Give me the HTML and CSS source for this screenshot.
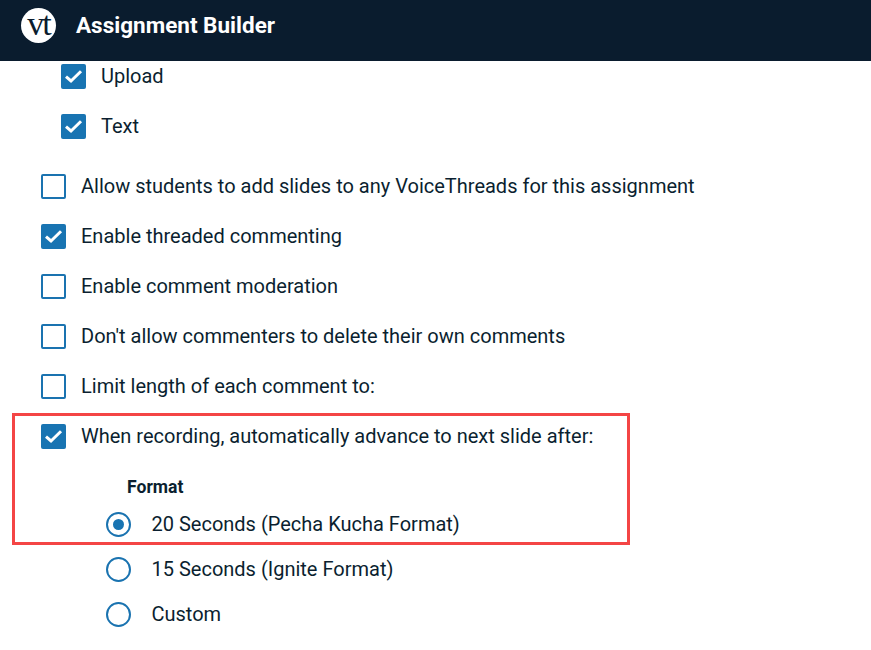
FILE: index.html
```html
<!DOCTYPE html>
<html lang="en">
<head>
<meta charset="utf-8">
<title>Assignment Builder</title>
<link rel="stylesheet" href="styles.css">
</head>
<body>
<header class="topbar">
  <div class="logo">vt</div>
  <h1 class="title">Assignment Builder</h1>
</header>
<main class="content">
  <div class="group sub">
    <div class="row"><span class="box on"><svg viewBox="0 0 25 25"><path d="M5 12.6l5 4.4L20 7.2"/></svg></span><span class="label">Upload</span></div>
    <div class="row"><span class="box on"><svg viewBox="0 0 25 25"><path d="M5 12.6l5 4.4L20 7.2"/></svg></span><span class="label">Text</span></div>
  </div>
  <div class="group">
    <div class="row"><span class="box"></span><span class="label">Allow students to add slides to any VoiceThreads for this assignment</span></div>
    <div class="row"><span class="box on"><svg viewBox="0 0 25 25"><path d="M5 12.6l5 4.4L20 7.2"/></svg></span><span class="label">Enable threaded commenting</span></div>
    <div class="row"><span class="box"></span><span class="label">Enable comment moderation</span></div>
    <div class="row"><span class="box"></span><span class="label">Don't allow commenters to delete their own comments</span></div>
    <div class="row"><span class="box"></span><span class="label">Limit length of each comment to:</span></div>
    <div class="row"><span class="box on"><svg viewBox="0 0 25 25"><path d="M5 12.6l5 4.4L20 7.2"/></svg></span><span class="label">When recording, automatically advance to next slide after:</span></div>
  </div>
  <div class="format">
    <div class="format-title">Format</div>
    <div class="radio-row"><span class="radio on"></span><span class="label">20 Seconds (Pecha Kucha Format)</span></div>
    <div class="radio-row"><span class="radio"></span><span class="label">15 Seconds (Ignite Format)</span></div>
    <div class="radio-row"><span class="radio"></span><span class="label">Custom</span></div>
  </div>
</main>
<div class="highlight"></div>
</body>
</html>
```
FILE: styles.css
```css
* { box-sizing: border-box; }
html, body { margin: 0; padding: 0; }
body {
  position: relative;
  width: 871px;
  height: 650px;
  overflow: hidden;
  background: #fff;
  color: #0b1f30;
  font-family: Roboto, "Liberation Sans", sans-serif;
  font-size: 20px;
}
.topbar {
  height: 61px;
  background: #0a1c2e;
  display: flex;
  align-items: center;
  padding: 0 0 10px 21px;
}
.logo {
  width: 35px;
  height: 35px;
  border-radius: 50%;
  background: #fff;
  color: #0a1c2e;
  font-family: "Liberation Serif", serif;
  font-size: 34px;
  letter-spacing: -2px;
  line-height: 32px;
  text-align: center;
  flex: none;
}
.title {
  margin: -1px 0 0 20px;
  color: #fff;
  font-size: 22.5px;
  font-weight: 700;
  line-height: 30px;
}
.content { padding-top: 3px; }
.group { display: flex; flex-direction: column; gap: 25px; padding-left: 41px; }
.group.sub { padding-left: 61px; margin-bottom: 35px; }
.row { display: flex; align-items: center; height: 25px; }
.box {
  width: 25px;
  height: 25px;
  flex: none;
  border: 2px solid #1a73b0;
  border-radius: 2px;
  background: #fff;
  margin-right: 15px;
}
.box.on { border: 0; background: #1874b2; }
.box svg { display: block; width: 25px; height: 25px; }
.box path { fill: none; stroke: #fff; stroke-width: 3; }
.label { line-height: 25px; white-space: nowrap; }
.format { padding-left: 106px; margin-top: 26px; }
.format-title {
  margin-left: 21px;
  font-size: 17.6px;
  font-weight: 700;
  line-height: 24px;
  margin-bottom: 13px;
}
.radio-row { display: flex; align-items: center; height: 25px; margin-bottom: 20px; }
.radio {
  width: 25px;
  height: 25px;
  flex: none;
  border: 2px solid #1a73b0;
  border-radius: 50%;
  margin-right: 20.5px;
  display: flex;
  align-items: center;
  justify-content: center;
}
.radio.on::after {
  content: "";
  width: 11px;
  height: 11px;
  border-radius: 50%;
  background: #1874b2;
}
.highlight {
  position: absolute;
  left: 12px;
  top: 413px;
  width: 618px;
  height: 132px;
  border: 3px solid #f44545;
  pointer-events: none;
}
```
